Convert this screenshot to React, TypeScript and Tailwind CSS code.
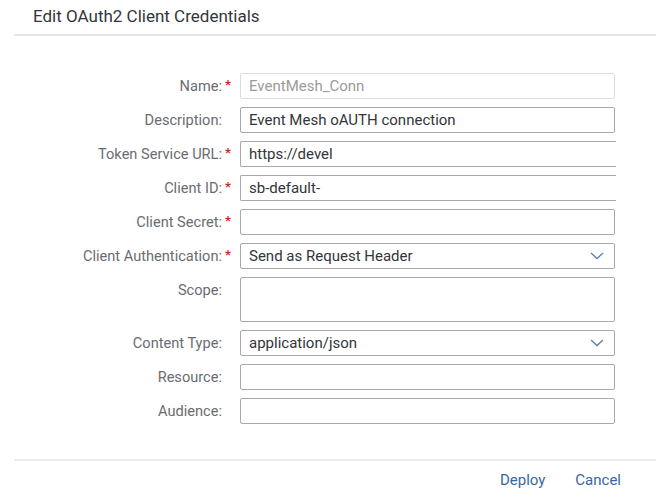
import React from 'react';

type Field = {
  label: string;
  value?: string;
  required?: boolean;
  kind?: 'input' | 'disabled' | 'select' | 'textarea' | 'clipped';
};

const fields: Field[] = [
  { label: 'Name:', value: 'EventMesh_Conn', required: true, kind: 'disabled' },
  { label: 'Description:', value: 'Event Mesh oAUTH connection' },
  { label: 'Token Service URL:', value: 'https://devel', required: true, kind: 'clipped' },
  { label: 'Client ID:', value: 'sb-default-', required: true, kind: 'clipped' },
  { label: 'Client Secret:', required: true },
  { label: 'Client Authentication:', value: 'Send as Request Header', required: true, kind: 'select' },
  { label: 'Scope:', kind: 'textarea' },
  { label: 'Content Type:', value: 'application/json', kind: 'select' },
  { label: 'Resource:' },
  { label: 'Audience:' },
];

function Chevron() {
  return (
    <svg width="14" height="8" viewBox="0 0 14 8" fill="none" className="mr-[10px]">
      <path d="M1 1l6 5.5L13 1" stroke="#5a7ea6" strokeWidth="1.3" />
    </svg>
  );
}

function Control({ f }: { f: Field }) {
  const kind = f.kind ?? 'input';
  if (kind === 'disabled') {
    return (
      <div className="h-[26px] border border-[#dcdcdc] rounded-[2px] flex items-center px-[8px] text-[#9b9b9b]">
        {f.value}
      </div>
    );
  }
  if (kind === 'clipped') {
    // right edge of these inputs runs past the dialog's content box
    return (
      <div className="h-[26px] border border-r-0 border-[#a9a9a9] rounded-l-[2px] flex items-center px-[8px] text-[#32363a] w-[376px]">
        {f.value}
      </div>
    );
  }
  if (kind === 'textarea') {
    return <div className="h-[45px] border border-[#a9a9a9] rounded-[2px]" />;
  }
  if (kind === 'select') {
    return (
      <div className="h-[26px] border border-[#a9a9a9] rounded-[2px] flex items-center justify-between pl-[8px] text-[#32363a]">
        <span>{f.value}</span>
        <Chevron />
      </div>
    );
  }
  return (
    <div className="h-[26px] border border-[#a9a9a9] rounded-[2px] flex items-center px-[8px] text-[#32363a]">
      {f.value}
    </div>
  );
}

export default function App() {
  return (
    <div
      className="w-[656px] h-[499px] bg-white flex flex-col text-[15px]"
      style={{ fontFamily: 'Roboto, "Liberation Sans", sans-serif' }}
    >
      {/* Header */}
      <div className="h-[34px] pl-[33px] flex items-center text-[17px] text-[#32363a]">
        Edit OAuth2 Client Credentials
      </div>
      <div className="ml-[14px] h-[2px] bg-[#e5e5e5]" />

      {/* Form */}
      <div className="pt-[37px] grid grid-cols-[222px_18px_375px] gap-y-[8px]">
        {fields.map((f) => (
          <React.Fragment key={f.label}>
            <div className="text-right text-[14.6px] text-[#6a6d70] leading-[26px]">{f.label}</div>
            <div className="leading-[24px] text-[13px] font-bold text-[#d0271d] pl-[3px]">
              {f.required ? '*' : ''}
            </div>
            <Control f={f} />
          </React.Fragment>
        ))}
      </div>

      {/* Footer */}
      <div className="mt-auto">
        <div className="ml-[14px] h-[2px] bg-[#ececec]" />
        <div className="h-[38px] flex items-center justify-end gap-[30px] pr-[35px] text-[15px] text-[#3668a0]">
          <button>Deploy</button>
          <button>Cancel</button>
        </div>
      </div>
    </div>
  );
}
